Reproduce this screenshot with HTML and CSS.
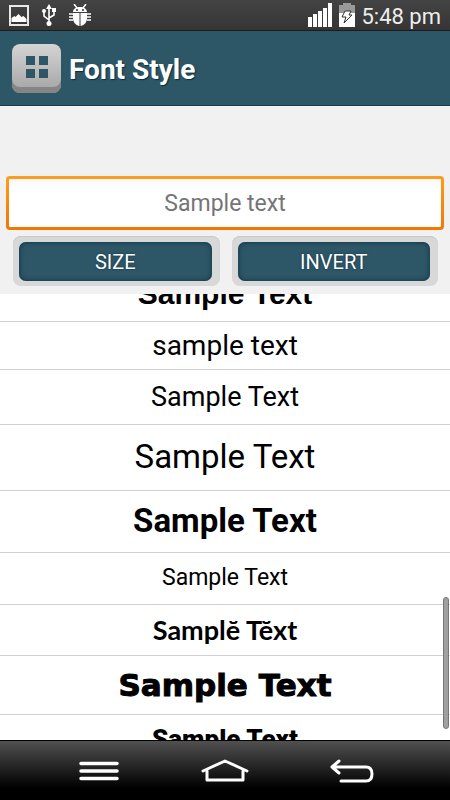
FILE: index.html
```html
<!DOCTYPE html>
<html lang="en">
<head>
<meta charset="utf-8">
<meta name="viewport" content="width=device-width, initial-scale=1">
<title>Font Style</title>
<link rel="stylesheet" href="styles.css">
</head>
<body>
<div class="status">
  <div class="status-group notices">
    <svg width="20" height="21" viewBox="0 0 20 21"><rect x="1" y="1" width="18" height="19" fill="none" stroke="#e8e8e8" stroke-width="2"/><path d="M2.500 17v-4l3-2 1 1 3-3 3 3 2-1 3 3v3z" fill="#fff"/></svg>
    <svg width="14" height="22" viewBox="0 0 14 22"><g fill="none" stroke="#fff" stroke-width="1.600"><path d="M7 3v16M2 8v4l5 4M12 6v5l-5 3"/></g><path d="M7 0l3 5H4zM10 4h4v4h-4z" fill="#fff"/><circle cx="2" cy="7" r="2" fill="#fff"/><circle cx="7" cy="19.500" r="2.500" fill="#fff"/></svg>
    <svg width="22" height="22" viewBox="0 0 22 22"><g stroke="#fff" stroke-width="1.500" fill="none"><path d="M5 0l3 4M17 0l-3 4M0 10h4M0 13h4M0 16h4M18 10h4M18 13h4M18 16h4"/></g><path d="M4 8c0-3 3-5 7-5s7 2 7 5zM4 9h6.500v13c-5-1-6.500-5-6.500-8zM11.500 9H18v5c0 4-2 7-6.500 8z" fill="#fff"/><circle cx="8" cy="6" r="1" fill="#333"/><circle cx="14" cy="6" r="1" fill="#333"/></svg>
  </div>
  <div class="status-group">
    <svg width="25" height="24" viewBox="0 0 25 24"><path d="M0 14h4v10H0zM5 11h4v13H5zM10 8h4v16h-4zM15 5h4v19h-4zM20 0h4v24h-4z" fill="#fff"/></svg>
    <svg width="16" height="24" viewBox="0 0 16 24"><path d="M4 0h8v2h4v9H0V2h4z" fill="#999"/><path d="M0 10h16v14H0z" fill="#fff"/><path d="M6 8h6l-2 4h3l-8 8 2-6H3z" fill="#fff" stroke="#333"/></svg>
    <time class="clock">5:48 pm</time>
  </div>
</div>
<header class="header">
  <button class="menu" aria-label="Menu"><svg width="22" height="24" viewBox="0 0 22 24"><path d="M0 1h9v9H0zM13 1h9v9h-9zM0 14h9v9H0zM13 14h9v9h-9z" fill="#2d5667"/></svg></button>
  <h1 class="title">Font Style</h1>
</header>
<section class="controls">
  <input class="sample-input" type="text" aria-label="Sample text" placeholder="Sample text">
  <div class="buttons">
    <div class="frame"><button class="action">SIZE</button></div>
    <div class="frame"><button class="action">INVERT</button></div>
  </div>
</section>
<main class="viewport">
  <ul class="fonts">
    <li class="row plain">Sample Text</li>
    <li class="row rounded">sample text</li>
    <li class="row hearts">Sample Text</li>
    <li class="row pen">Sample Text</li>
    <li class="row marker">Sample Text</li>
    <li class="row dotted">Sample Text</li>
    <li class="row brush">Samplĕ Tĕxt</li>
    <li class="row drip">Sample Text</li>
    <li class="row spooky">Sample Text</li>
  </ul>
  <div class="scrollbar"></div>
</main>
<nav class="navbar">
  <button class="nav" aria-label="Options"><svg width="42" height="24" viewBox="0 0 42 24"><path d="M3 4.500h36M3 12h36M3 19.500h36" stroke="#fff" stroke-width="3.500" stroke-linecap="round"/></svg></button>
  <button class="nav" aria-label="Home"><svg width="50" height="24" viewBox="0 0 50 24"><path d="M3 12L25 2l22 10M7 12v9h36v-9" fill="none" stroke="#fff" stroke-width="3" stroke-linecap="round" stroke-linejoin="round"/></svg></button>
  <button class="nav" aria-label="Back"><svg width="46" height="26" viewBox="0 0 46 26"><path d="M10 3L3 9l7 6M3 9h34q6 0 6 7t-6 7H12" fill="none" stroke="#fff" stroke-width="3" stroke-linecap="round" stroke-linejoin="round"/></svg></button>
</nav>
</body>
</html>
```

FILE: styles.css
```css
* { box-sizing: border-box; }
body {
  margin: 0;
  height: 100vh;
  display: flex;
  flex-direction: column;
  background: #fff;
  font-family: Roboto, sans-serif;
}
svg { display: block; flex: none; }
button { padding: 0; border: 0; font: inherit; }
.status {
  flex: none;
  display: flex;
  justify-content: space-between;
  align-items: center;
  height: 31px;
  padding: 0 9px;
  background: linear-gradient(#444, #353535);
  border-bottom: 1px solid #211a1a;
}
.status-group { display: flex; align-items: center; gap: 6px; }
.notices { gap: 13px; }
.clock { color: #eee; font-size: 22px; line-height: 30px; padding-top: 3px; }
.header {
  flex: none;
  display: flex;
  align-items: center;
  gap: 8px;
  height: 75px;
  padding: 0 12px;
  background: #2d5667;
  border-bottom: 1px solid #123d52;
}
.menu {
  display: grid;
  place-items: center;
  width: 49px;
  height: 49px;
  padding-bottom: 3px;
  border-radius: 8px;
  background: linear-gradient(#d4d4d4, #a4a4a4);
  box-shadow: inset 0 -6px 0 #858585;
}
.title {
  margin: 0;
  padding-top: 4px;
  color: #fff;
  font-size: 28px;
  line-height: 32px;
  text-shadow: 1px 1px 1px #0b2d3d;
}
.controls { flex: none; padding: 70px 6px 8px; background: #f1f1f1; }
.sample-input {
  display: block;
  width: 100%;
  height: 54px;
  padding: 0 12px;
  border: 3px solid transparent;
  border-radius: 4px;
  outline: 0;
  background: linear-gradient(#f8f8f8, #fff 10px) padding-box, linear-gradient(#ff9c1c, #f47600) border-box;
  font: 23px/32px Roboto, sans-serif;
  color: #222;
  text-align: center;
}
.sample-input::placeholder { color: #757575; opacity: 1; }
.buttons { display: flex; gap: 12px; padding: 6px 6px 0 7px; }
.frame {
  flex: 1;
  padding: 6px 8px 5px 6px;
  border-radius: 8px;
  background: #d8d8d8;
  box-shadow: inset 0 1px 1px #c8c8c8;
}
.action {
  display: block;
  width: 100%;
  height: 39px;
  border-radius: 7px;
  background: #2d5667;
  box-shadow: inset 0 0 5px #0c303f;
  color: #fff;
  font-size: 20px;
  line-height: 41px;
  text-shadow: 0 0 2px #0b2d3d;
}
.viewport { flex: 1; min-height: 0; position: relative; overflow: hidden; }
.fonts { list-style: none; margin: -20px 0 0; padding: 0; }
.row {
  display: flex;
  align-items: center;
  justify-content: center;
  border-bottom: 1px solid #d0d0d0;
  color: #000;
  line-height: 36px;
  white-space: pre;
}
.plain { height: 48px; padding-bottom: 8px; font-family: "Liberation Sans", sans-serif; font-weight: 700; font-size: 30px; }
.rounded { height: 48px; font-size: 28px; }
.hearts { height: 55px; font-size: 27px; }
.pen { height: 66px; padding-bottom: 2px; font-size: 33px; }
.marker { height: 62px; padding-bottom: 2px; font-size: 33px; font-weight: 700; }
.dotted { height: 52px; padding-bottom: 2px; font-size: 23px; }
.brush { height: 51px; font-family: Lato, sans-serif; font-size: 27px; font-weight: 700; }
.drip { height: 59px; font-family: "DejaVu Sans", sans-serif; font-size: 31px; font-weight: 700; -webkit-text-stroke: 1px #000; }
.spooky { height: 48px; font-size: 26px; font-weight: 900; }
.scrollbar {
  position: absolute;
  right: 1px;
  bottom: 11px;
  width: 6px;
  height: 132px;
  border: 1px solid #777;
  border-radius: 3px;
  background: #a0a0a0;
}
.navbar {
  flex: none;
  display: flex;
  align-items: center;
  justify-content: space-between;
  height: 60px;
  padding: 0 75px 0 78px;
  border-top: 1px solid #000;
  background: linear-gradient(#505050, #000 80%);
}
.nav { background: none; }
```
